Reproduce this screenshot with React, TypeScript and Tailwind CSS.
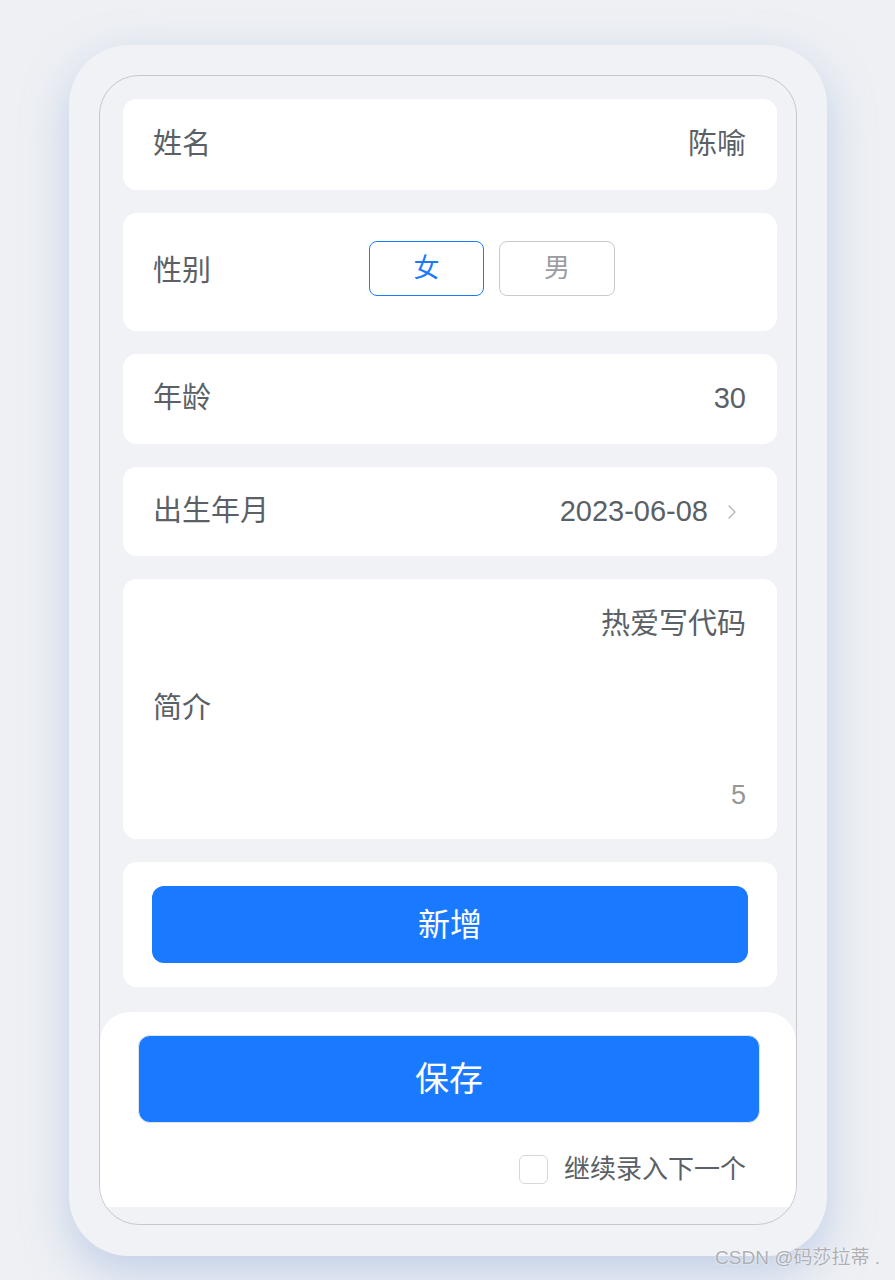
import { ChevronRight } from "lucide-react"

const font = { fontFamily: '"Liberation Sans", "Noto Sans CJK SC", sans-serif' }

function Row({ label, value, height }: { label: string; value: string; height: string }) {
  return (
    <div className={`flex items-center justify-between rounded-[14px] bg-white pl-[30px] pr-[31px] ${height}`}>
      <span className="text-[29px] text-[#5b5f66]">{label}</span>
      <span className="text-[29px] text-[#5b5f66]">{value}</span>
    </div>
  )
}

export default function App() {
  return (
    <div className="relative min-h-[1280px] w-full bg-[#eef0f4] pt-[45px]" style={font}>
      <div className="ml-[69px] h-[1211px] w-[758px] rounded-[60px] bg-[#f0f2f6] p-[30px] shadow-[0_16px_44px_rgba(150,175,220,0.5)]">
        <div className="flex h-[1150px] flex-col overflow-hidden rounded-[40px] border border-[#c6c8cc] bg-[#f0f2f6]">
          <div className="flex flex-col gap-[23px] pl-[23px] pr-[19px] pt-[23px]">
            <Row label="姓名" value="陈喻" height="h-[91px]" />

            <div className="flex h-[118px] items-center rounded-[14px] bg-white pl-[30px] pr-[31px]">
              <span className="w-[216px] text-[29px] text-[#5b5f66]">性别</span>
              <div className="mb-[7px] flex gap-[15px]">
                <button className="flex h-[55px] w-[115px] items-center justify-center rounded-[8px] border-[1.5px] border-[#1a7aff] text-[26px] text-[#1a7aff]">
                  女
                </button>
                <button className="flex h-[55px] w-[116px] items-center justify-center rounded-[8px] border-[1.5px] border-[#c8c9cc] text-[26px] text-[#9a9ca1]">
                  男
                </button>
              </div>
            </div>

            <Row label="年龄" value="30" height="h-[90px]" />

            <div className="flex h-[89px] items-center justify-between rounded-[14px] bg-white pl-[30px] pr-[33px]">
              <span className="text-[29px] text-[#5b5f66]">出生年月</span>
              <div className="flex items-center gap-[12px]">
                <span className="text-[29px] text-[#5b5f66]">2023-06-08</span>
                <ChevronRight className="h-[24px] w-[24px] text-[#b4b6ba]" strokeWidth={1.4} />
              </div>
            </div>

            <div className="flex h-[260px] items-center justify-between rounded-[14px] bg-white pl-[30px] pr-[31px]">
              <span className="text-[29px] text-[#5b5f66]">简介</span>
              <div className="flex h-full flex-col items-end justify-between pb-[28px] pt-[26px]">
                <span className="text-[29px] leading-[38px] text-[#5b5f66]">热爱写代码</span>
                <span className="text-[27px] leading-[32px] text-[#969799]">5</span>
              </div>
            </div>

            <div className="flex h-[125px] items-center rounded-[14px] bg-white px-[29px]">
              <button className="flex h-[77px] w-full items-center justify-center rounded-[12px] bg-[#1a7aff] text-[32px] text-white">
                新增
              </button>
            </div>
          </div>

          <div className="mt-[25px] flex h-[195px] flex-col rounded-t-[30px] bg-white pl-[38px] pr-[36px] pt-[23px]">
            <button className="flex h-[88px] w-full items-center justify-center rounded-[12px] border border-[#dfe3ea] bg-[#1a7aff] text-[34px] text-white">
              保存
            </button>
            <div className="mt-[27px] flex items-center justify-end gap-[16px] pr-[14px]">
              <span className="h-[29px] w-[29px] rounded-[6px] border border-[#d5d7db] bg-white" />
              <span className="text-[26px] text-[#5b5f66]">继续录入下一个</span>
            </div>
          </div>
        </div>
      </div>

      <span className="absolute bottom-[8px] right-[15px] text-[19px] text-[#aeb0b4] [text-shadow:0_0_2px_#ffffff]">
        CSDN @码莎拉蒂 .
      </span>
    </div>
  )
}
